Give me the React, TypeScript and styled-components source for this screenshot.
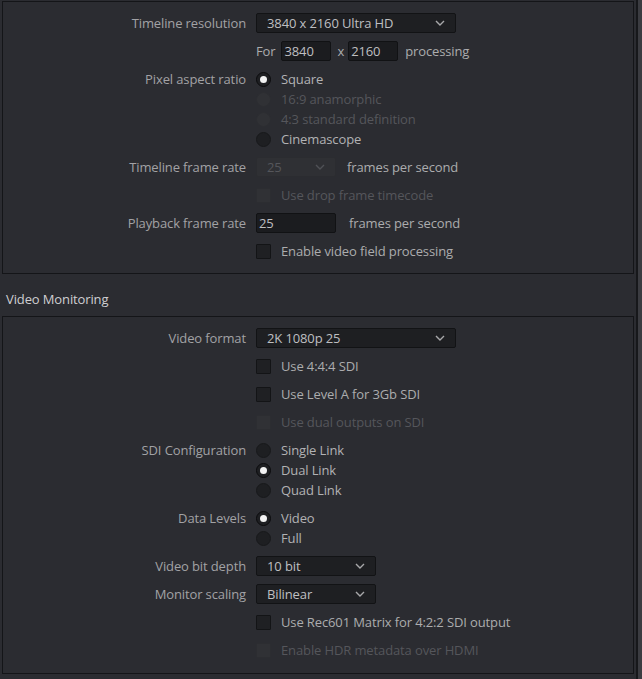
import React from 'react';
import styled, { createGlobalStyle } from 'styled-components';

const GlobalStyle = createGlobalStyle`
  html, body {
    margin: 0;
    padding: 0;
    background: #2b2c31;
  }
  body {
    font-family: 'Open Sans', 'Noto Sans', sans-serif;
    font-size: 13px;
    letter-spacing: -0.12px;
    color: #afafb1;
  }
`;

const Page = styled.div`
  display: flex;
  width: 642px;
  height: 679px;
  overflow: hidden;
  background: #2b2c31;
`;

const Content = styled.div`
  flex: 1;
  display: flex;
  flex-direction: column;
  padding: 1px 0 0 2px;
`;

const Scrollbar = styled.div`
  width: 8px;
  display: flex;
  &::before {
    content: '';
    width: 2px;
  }
  &::after {
    content: '';
    flex: 1;
    border-left: 2px solid #17181b;
    background: #3b3c41;
  }
`;

const Panel = styled.section<{ $bottom?: number }>`
  border: 1px solid #141518;
  padding: 7px 0 ${({ $bottom }) => $bottom ?? 8}px;
`;

const SectionTitle = styled.h2`
  margin: 0;
  height: 42px;
  box-sizing: border-box;
  padding: 16px 0 0 4px;
  font-size: 13px;
  line-height: 18px;
  font-weight: 400;
  color: #cfcfd1;
`;

const Row = styled.div`
  display: grid;
  grid-template-columns: 243px 1fr;
  column-gap: 10px;
  align-items: start;
`;

const Label = styled.div`
  height: 28px;
  line-height: 28px;
  text-align: right;
  color: #a2a2a5;
  white-space: nowrap;
`;

const Controls = styled.div<{ $gap?: number }>`
  display: flex;
  align-items: center;
  gap: ${({ $gap }) => $gap ?? 6}px;
  height: 28px;
  white-space: nowrap;
`;

const Group = styled.div`
  padding: 4px 0;
  display: flex;
  flex-direction: column;
`;

const Option = styled.div<{ $disabled?: boolean }>`
  display: flex;
  align-items: center;
  gap: 10px;
  height: 20px;
  color: ${({ $disabled }) => ($disabled ? '#55565b' : '#b2b2b4')};
`;

const Text = styled.span<{ $disabled?: boolean; $ml?: number }>`
  margin-left: ${({ $ml }) => $ml ?? 0}px;
  color: ${({ $disabled }) => ($disabled ? '#55565b' : '#acacae')};
`;

const Radio = styled.span<{ $checked?: boolean; $disabled?: boolean }>`
  position: relative;
  width: 15px;
  height: 15px;
  border-radius: 50%;
  box-sizing: border-box;
  flex: none;
  background: ${({ $disabled }) => ($disabled ? '#303135' : '#1e1f22')};
  border: 1px solid ${({ $disabled, $checked }) => ($disabled ? '#2c2d31' : $checked ? '#0b0b0d' : '#18191b')};
  &::after {
    content: '';
    display: ${({ $checked }) => ($checked ? 'block' : 'none')};
    position: absolute;
    left: 3px;
    top: 3px;
    width: 7px;
    height: 7px;
    border-radius: 50%;
    background: #f2f2f2;
  }
`;

const Check = styled.span<{ $disabled?: boolean }>`
  width: 15px;
  height: 15px;
  box-sizing: border-box;
  flex: none;
  border-radius: 1px;
  background: ${({ $disabled }) => ($disabled ? '#303135' : '#1f2023')};
  border: 1px solid ${({ $disabled }) => ($disabled ? '#2c2d31' : '#131416')};
`;

const Select = styled.div<{ $width: number; $disabled?: boolean }>`
  width: ${({ $width }) => $width}px;
  height: 20px;
  box-sizing: border-box;
  display: flex;
  align-items: center;
  justify-content: space-between;
  padding: 0 10px;
  border-radius: 2px;
  background: ${({ $disabled }) => ($disabled ? '#2f3034' : '#1e1f22')};
  border: 1px solid ${({ $disabled }) => ($disabled ? '#2b2c30' : '#121315')};
  color: ${({ $disabled }) => ($disabled ? '#55565b' : '#bfbfc1')};
`;

const Field = styled.div<{ $width: number; $ml?: number }>`
  width: ${({ $width }) => $width}px;
  height: 20px;
  margin-left: ${({ $ml }) => $ml ?? 0}px;
  box-sizing: border-box;
  display: flex;
  align-items: center;
  padding: 0 2px;
  border-radius: 2px;
  background: #1b1c1f;
  border: 1px solid #111214;
  color: #bfbfc1;
`;

const Chevron: React.FC<{ disabled?: boolean }> = ({ disabled }) => (
  <svg width="10" height="6" viewBox="0 0 10 6">
    <polyline
      points="1,1 5,5 9,1"
      fill="none"
      stroke={disabled ? '#505156' : '#a8a8aa'}
      strokeWidth="1.4"
    />
  </svg>
);

const Dropdown: React.FC<{ value: string; width: number; disabled?: boolean }> = ({ value, width, disabled }) => (
  <Select $width={width} $disabled={disabled}>
    <span>{value}</span>
    <Chevron disabled={disabled} />
  </Select>
);

const CheckRow: React.FC<{ text: string; disabled?: boolean }> = ({ text, disabled }) => (
  <Row>
    <Label />
    <Controls $gap={10}>
      <Check $disabled={disabled} />
      <Text $disabled={disabled}>{text}</Text>
    </Controls>
  </Row>
);

interface RadioItem {
  text: string;
  checked?: boolean;
  disabled?: boolean;
}

const RadioRow: React.FC<{ label: string; items: RadioItem[] }> = ({ label, items }) => (
  <Row>
    <Label>{label}</Label>
    <Group>
      {items.map((item) => (
        <Option key={item.text} $disabled={item.disabled}>
          <Radio $checked={item.checked} $disabled={item.disabled} />
          <span>{item.text}</span>
        </Option>
      ))}
    </Group>
  </Row>
);

const App: React.FC = () => (
  <Page>
    <GlobalStyle />
    <Content>
      <Panel>
        <Row>
          <Label>Timeline resolution</Label>
          <Controls>
            <Dropdown value="3840 x 2160 Ultra HD" width={200} />
          </Controls>
        </Row>
        <Row>
          <Label />
          <Controls $gap={0}>
            <Text>For</Text>
            <Field $width={50} $ml={6}>3840</Field>
            <Text $ml={6}>x</Text>
            <Field $width={50} $ml={4}>2160</Field>
            <Text $ml={7}>processing</Text>
          </Controls>
        </Row>
        <RadioRow
          label="Pixel aspect ratio"
          items={[
            { text: 'Square', checked: true },
            { text: '16:9 anamorphic', disabled: true },
            { text: '4:3 standard definition', disabled: true },
            { text: 'Cinemascope' },
          ]}
        />
        <Row>
          <Label>Timeline frame rate</Label>
          <Controls $gap={11}>
            <Dropdown value="25" width={80} disabled />
            <Text>frames per second</Text>
          </Controls>
        </Row>
        <CheckRow text="Use drop frame timecode" disabled />
        <Row>
          <Label>Playback frame rate</Label>
          <Controls $gap={13}>
            <Field $width={80}>25</Field>
            <Text>frames per second</Text>
          </Controls>
        </Row>
        <CheckRow text="Enable video field processing" />
      </Panel>

      <SectionTitle>Video Monitoring</SectionTitle>

      <Panel $bottom={9}>
        <Row>
          <Label>Video format</Label>
          <Controls>
            <Dropdown value="2K 1080p 25" width={200} />
          </Controls>
        </Row>
        <CheckRow text="Use 4:4:4 SDI" />
        <CheckRow text="Use Level A for 3Gb SDI" />
        <CheckRow text="Use dual outputs on SDI" disabled />
        <RadioRow
          label="SDI Configuration"
          items={[
            { text: 'Single Link' },
            { text: 'Dual Link', checked: true },
            { text: 'Quad Link' },
          ]}
        />
        <RadioRow
          label="Data Levels"
          items={[
            { text: 'Video', checked: true },
            { text: 'Full' },
          ]}
        />
        <Row>
          <Label>Video bit depth</Label>
          <Controls>
            <Dropdown value="10 bit" width={120} />
          </Controls>
        </Row>
        <Row>
          <Label>Monitor scaling</Label>
          <Controls>
            <Dropdown value="Bilinear" width={120} />
          </Controls>
        </Row>
        <CheckRow text="Use Rec601 Matrix for 4:2:2 SDI output" />
        <CheckRow text="Enable HDR metadata over HDMI" disabled />
      </Panel>
    </Content>
    <Scrollbar />
  </Page>
);

export default App;
